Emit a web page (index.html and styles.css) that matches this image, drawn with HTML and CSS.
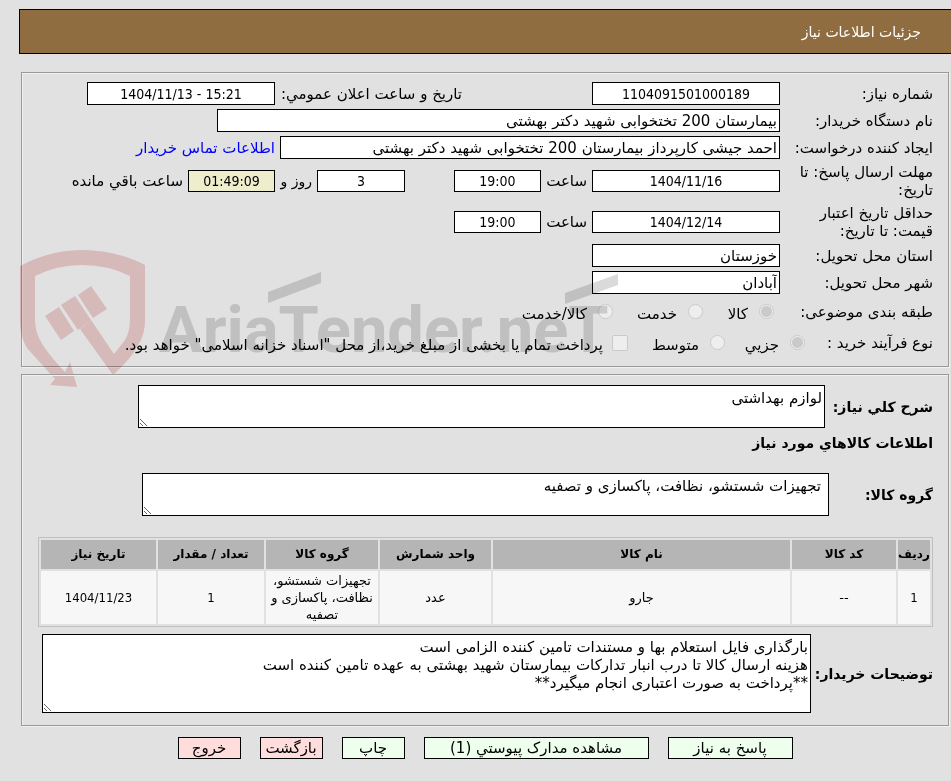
FILE: index.html
```html
<!DOCTYPE html>
<html lang="fa" dir="rtl">
<head>
<meta charset="utf-8">
<title>جزئیات اطلاعات نیاز</title>
<link rel="stylesheet" href="styles.css">
</head>
<body>
<header class="title-bar"><h1>جزئیات اطلاعات نیاز</h1></header>
<main>
<section class="panel summary">
  <div class="row">
    <label class="name" for="num">شماره نیاز:</label>
    <span class="first"><input class="box wide mid" id="num" value="1104091501000189" readonly></span>
    <label class="announce" for="ann">تاریخ و ساعت اعلان عمومي:</label>
    <input class="box wide mid" id="ann" dir="ltr" value="1404/11/13 - 15:21" readonly>
  </div>
  <div class="row">
    <label class="name" for="org">نام دستگاه خریدار:</label>
    <input class="box org" id="org" value="بیمارستان 200 تختخوابی شهید دکتر بهشتی" readonly>
  </div>
  <div class="row">
    <label class="name" for="req">ایجاد کننده درخواست:</label>
    <input class="box creator" id="req" value="احمد جیشی کارپرداز بیمارستان 200 تختخوابی شهید دکتر بهشتی" readonly>
    <a href="#contact">اطلاعات تماس خریدار</a>
  </div>
  <div class="row tall">
    <label class="name" for="due">مهلت ارسال پاسخ: تا تاریخ:</label>
    <input class="box wide mid" id="due" value="1404/11/16" readonly>
    <label class="hour" for="dueh">ساعت</label>
    <input class="box short mid" id="dueh" value="19:00" readonly>
    <input class="box short mid days" id="days" value="3" readonly>
    <label class="and" for="days">روز و</label>
    <input class="box short mid timer" id="left" value="01:49:09" readonly>
    <label for="left">ساعت باقي مانده</label>
  </div>
  <div class="row tall">
    <label class="name" for="val">حداقل تاریخ اعتبار قیمت: تا تاریخ:</label>
    <input class="box wide mid" id="val" value="1404/12/14" readonly>
    <label class="hour" for="valh">ساعت</label>
    <input class="box short mid" id="valh" value="19:00" readonly>
  </div>
  <div class="row">
    <label class="name" for="prov">استان محل تحویل:</label>
    <input class="box wide" id="prov" value="خوزستان" readonly>
  </div>
  <div class="row">
    <label class="name" for="city">شهر محل تحویل:</label>
    <input class="box wide" id="city" value="آبادان" readonly>
  </div>
  <div class="row options">
    <span class="name">طبقه بندی موضوعی:</span>
    <label class="option o1"><input type="radio" name="cat" checked disabled><span>کالا</span></label>
    <label class="option o2"><input type="radio" name="cat" disabled><span>خدمت</span></label>
    <label class="option"><input type="radio" name="cat" disabled><span>کالا/خدمت</span></label>
  </div>
  <div class="row options process">
    <span class="name">نوع فرآیند خرید :</span>
    <label class="option o3"><input type="radio" name="proc" checked disabled><span>جزیي</span></label>
    <label class="option o4"><input type="radio" name="proc" disabled><span>متوسط</span></label>
    <label class="option check"><input type="checkbox" disabled><span>پرداخت تمام یا بخشی از مبلغ خرید،از محل "اسناد خزانه اسلامی" خواهد بود.</span></label>
  </div>
  <svg class="watermark" viewBox="0 0 600 140" aria-hidden="true">
    <g fill="#f3d2d2">
      <path d="M0 16Q30 0 62 0 96 0 125 15V70Q125 85 118 95 112 108 93 125L60 79 71 70 94 104 105 90Q110 82 110 68V26Q88 15 62 15 37 15 15 26V68Q15 80 19 88 25 101 45 122L50 112 57 137 30 135 35 129 7 98Q0 87 0 70Z"/>
      <path d="M25 66 39 57 54 81 41 90ZM41 55 55 46 71 70 58 80ZM58 45 71 36 87 59 73 68Z"/>
    </g>
    <g fill="#dadada">
      <text class="brand" x="139" y="102">AriaTender.neT</text>
      <path d="M248 42 301 22V33L248 53ZM545 43 598 24V35L545 54Z"/>
    </g>
  </svg>
</section>
<section class="panel items">
  <div class="line">
    <label for="desc">شرح کلي نیاز:</label>
    <textarea class="box desc" id="desc" readonly>لوازم بهداشتی</textarea>
  </div>
  <h2>اطلاعات کالاهاي مورد نیاز</h2>
  <div class="line">
    <label class="group-name" for="grp">گروه کالا:</label>
    <textarea class="box desc indented" id="grp" readonly>تجهیزات شستشو، نظافت، پاکسازی و تصفیه</textarea>
  </div>
  <table>
    <colgroup><col class="c1"><col class="c2"><col><col class="c4"><col class="c5"><col class="c6"><col class="c7"></colgroup>
    <thead><tr><th>ردیف</th><th>کد کالا</th><th>نام کالا</th><th>واحد شمارش</th><th>گروه کالا</th><th>تعداد / مقدار</th><th>تاریخ نیاز</th></tr></thead>
    <tbody><tr><td class="num">1</td><td>--</td><td>جارو</td><td>عدد</td><td>تجهیزات شستشو، نظافت، پاکسازی و تصفیه</td><td class="num">1</td><td class="num">1404/11/23</td></tr></tbody>
  </table>
  <div class="line">
    <label class="notes-name" for="notes">توضیحات خریدار:</label>
    <textarea class="box notes" id="notes" readonly>بارگذاری فایل استعلام بها و مستندات تامین کننده الزامی است
هزینه ارسال کالا تا درب انبار تدارکات بیمارستان شهید بهشتی به عهده تامین کننده است
**پرداخت به صورت اعتباری انجام میگیرد**</textarea>
  </div>
</section>
<div class="actions">
  <button class="reply" type="button">پاسخ به نیاز</button>
  <button class="docs" type="button">مشاهده مدارک پیوستي (1)</button>
  <button type="button">چاپ</button>
  <button class="leave" type="button">بازگشت</button>
  <button class="leave" type="button">خروج</button>
</div>
</main>
</body>
</html>
```
FILE: styles.css
```css
* { box-sizing: border-box; }
body {
  margin: 0;
  padding: 9px 0 0 19px;
  background: #e1e1e1;
  color: #000;
  font: 15px/18px "DejaVu Sans", sans-serif;
}
input, textarea, button { font: inherit; color: inherit; margin: 0; }
.title-bar {
  display: flex;
  align-items: center;
  height: 45px;
  padding: 0 30px;
  background: #8f6d41;
  border: 1px solid #000;
  border-right: 0;
  color: #fff;
}
h1 { margin: 0; font-size: 14px; font-weight: normal; }
main { padding: 18px 2px 0; }
.panel {
  position: relative;
  padding: 7px 15px 8px;
  border: 1px solid #9a9a9a;
  box-shadow: 1px 1px #f0f0f0, inset 1px 1px #f0f0f0;
}
.row { display: flex; align-items: center; gap: 5px; height: 27px; white-space: nowrap; }
.row.tall { height: 40px; }
.row.tall + .row.tall { height: 41px; }
.name { flex: 0 0 148px; }
.tall .name { white-space: normal; padding-left: 8px; }
.box {
  height: 23px;
  padding: 0 2px;
  background: #fff;
  border: 1px solid #000;
  border-radius: 0;
  outline: 0;
  min-width: 0;
}
.mid { text-align: center; font-family: "DejaVu Sans Condensed", sans-serif; font-size: 14px; }
.first { flex: 0 0 313px; }
.wide { width: 188px; }
.short { width: 87px; }
.tall .box { height: 22px; }
.announce { flex: 0 0 182px; }
.org { flex: 0 1 563px; }
.creator { flex: 0 1 500px; }
.hour { flex: 0 0 41px; }
.days { width: 88px; margin-right: 44px; }
.and { flex: 0 0 32px; min-width: 0; font-size: 14px; }
.timer { background: #eeeecc; }
a { color: #00f; text-decoration: none; }
.options { height: 31px; gap: 0; }
.options .name { flex-basis: 159px; }
.process .name { flex-basis: 128px; }
.option { display: flex; align-items: center; gap: 11px; }
.option span { padding-top: 4px; }
.o1 { flex: 0 0 71px; }
.o2 { flex: 0 0 90px; }
.o3 { flex: 0 0 80px; }
.o4 { flex: 0 0 97px; }
.check { gap: 9px; }
.option input {
  appearance: none;
  flex: none;
  width: 15px;
  height: 15px;
  border: 1px solid #cacaca;
  border-radius: 50%;
  background: #eee;
}
.option input:checked { background: radial-gradient(circle, #cacaca 5px, #eee 6px); }
.option input[type="checkbox"] { width: 16px; height: 16px; border-radius: 2px; }
.watermark {
  position: absolute;
  left: -2px;
  bottom: -24px;
  width: 600px;
  height: 140px;
  mix-blend-mode: multiply;
  pointer-events: none;
}
.brand { direction: ltr; font: bold 65px Roboto, sans-serif; }
.items { margin-top: 7px; padding: 10px 15px 12px 16px; }
.line { display: flex; align-items: center; gap: 5px; }
.line label, h2 { font-size: 14px; font-weight: bold; white-space: nowrap; }
.line label { flex: 0 0 103px; }
.line .group-name { flex-basis: 99px; }
.line .notes-name { flex-basis: 117px; min-width: 0; }
.line .box { padding: 3px 2px; resize: both; }
.line .desc { flex: 0 1 687px; height: 43px; }
.line .indented { padding-right: 7px; }
h2 { margin: 6px 0 21px; }
table {
  width: 100%;
  margin: 21px 0 7px;
  border: 1px solid #bfbfbf;
  border-collapse: separate;
  border-spacing: 2px;
  table-layout: fixed;
  font-size: 13px;
  line-height: 17px;
  text-align: center;
}
th { height: 29px; padding: 0; background: #b5b5b5; font-size: 12px; }
td { height: 53px; padding: 1px; background: #f7f7f7; }
.num { font-family: "DejaVu Sans Condensed", sans-serif; }
.c1 { width: 32px; }
.c2 { width: 104px; }
.c4 { width: 111px; }
.c5 { width: 112px; }
.c6 { width: 106px; }
.c7 { width: 115px; }
.line .notes { flex: 0 1 769px; height: 79px; }
.actions { display: flex; justify-content: center; gap: 19px; margin-top: 11px; }
button {
  width: 63px;
  height: 22px;
  padding: 0;
  background: #eeffee;
  border: 1px solid #000;
  white-space: nowrap;
}
.leave { background: #ffdddd; }
.reply { width: 125px; }
.docs { width: 225px; }
```
